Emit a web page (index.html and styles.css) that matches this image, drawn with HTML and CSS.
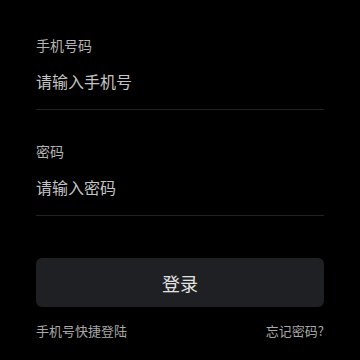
FILE: index.html
```html
<!DOCTYPE html>
<html lang="zh-CN">
<head>
    <meta charset="UTF-8">
    <meta name="viewport" content="width=device-width, initial-scale=1.0">
    <title>登录</title>
    <link rel="stylesheet" href="styles.css">
</head>
<body>

    <form class="login-form" onsubmit="event.preventDefault()">
        <div class="field">
            <label for="phone">手机号码</label>
            <input type="tel" id="phone" placeholder="请输入手机号">
        </div>
        <div class="field">
            <label for="password">密码</label>
            <input type="password" id="password" placeholder="请输入密码">
        </div>
        <button type="submit" class="login-btn">登录</button>
        <div class="links">
            <a href="#">手机号快捷登陆</a>
            <a href="#">忘记密码?</a>
        </div>
    </form>

</body>
</html>
```

FILE: styles.css
```css
body {
    font-family: "Noto Sans CJK SC", "Noto Sans", sans-serif;
    background-color: #000;
    margin: 0;
    padding: 0;
    color: #c8c8c8;
}

.login-form {
    display: flex;
    flex-direction: column;
    padding: 35px 36px 0;
}

.field {
    display: flex;
    flex-direction: column;
    gap: 4px;
    border-bottom: 1px solid #222226;
}

.field + .field {
    margin-top: 31px;
}

label {
    font-size: 14px;
    line-height: 20px;
    color: #b4b4b4;
}

input {
    box-sizing: border-box;
    height: 50px;
    padding: 0 0 7px;
    border: none;
    outline: none;
    background: transparent;
    font-family: inherit;
    font-size: 16px;
    color: #e0e0e0;
}

input::placeholder {
    color: #c4c4c4;
}

.login-btn {
    margin-top: 42px;
    height: 49px;
    border: none;
    border-radius: 6px;
    background-color: #1f2024;
    color: #e2e2e2;
    font-family: inherit;
    font-size: 18px;
    cursor: pointer;
}

.links {
    display: flex;
    justify-content: space-between;
    margin-top: 14px;
    font-size: 13px;
    line-height: 20px;
}

.links a {
    color: #a8a8a8;
    text-decoration: none;
}
```
